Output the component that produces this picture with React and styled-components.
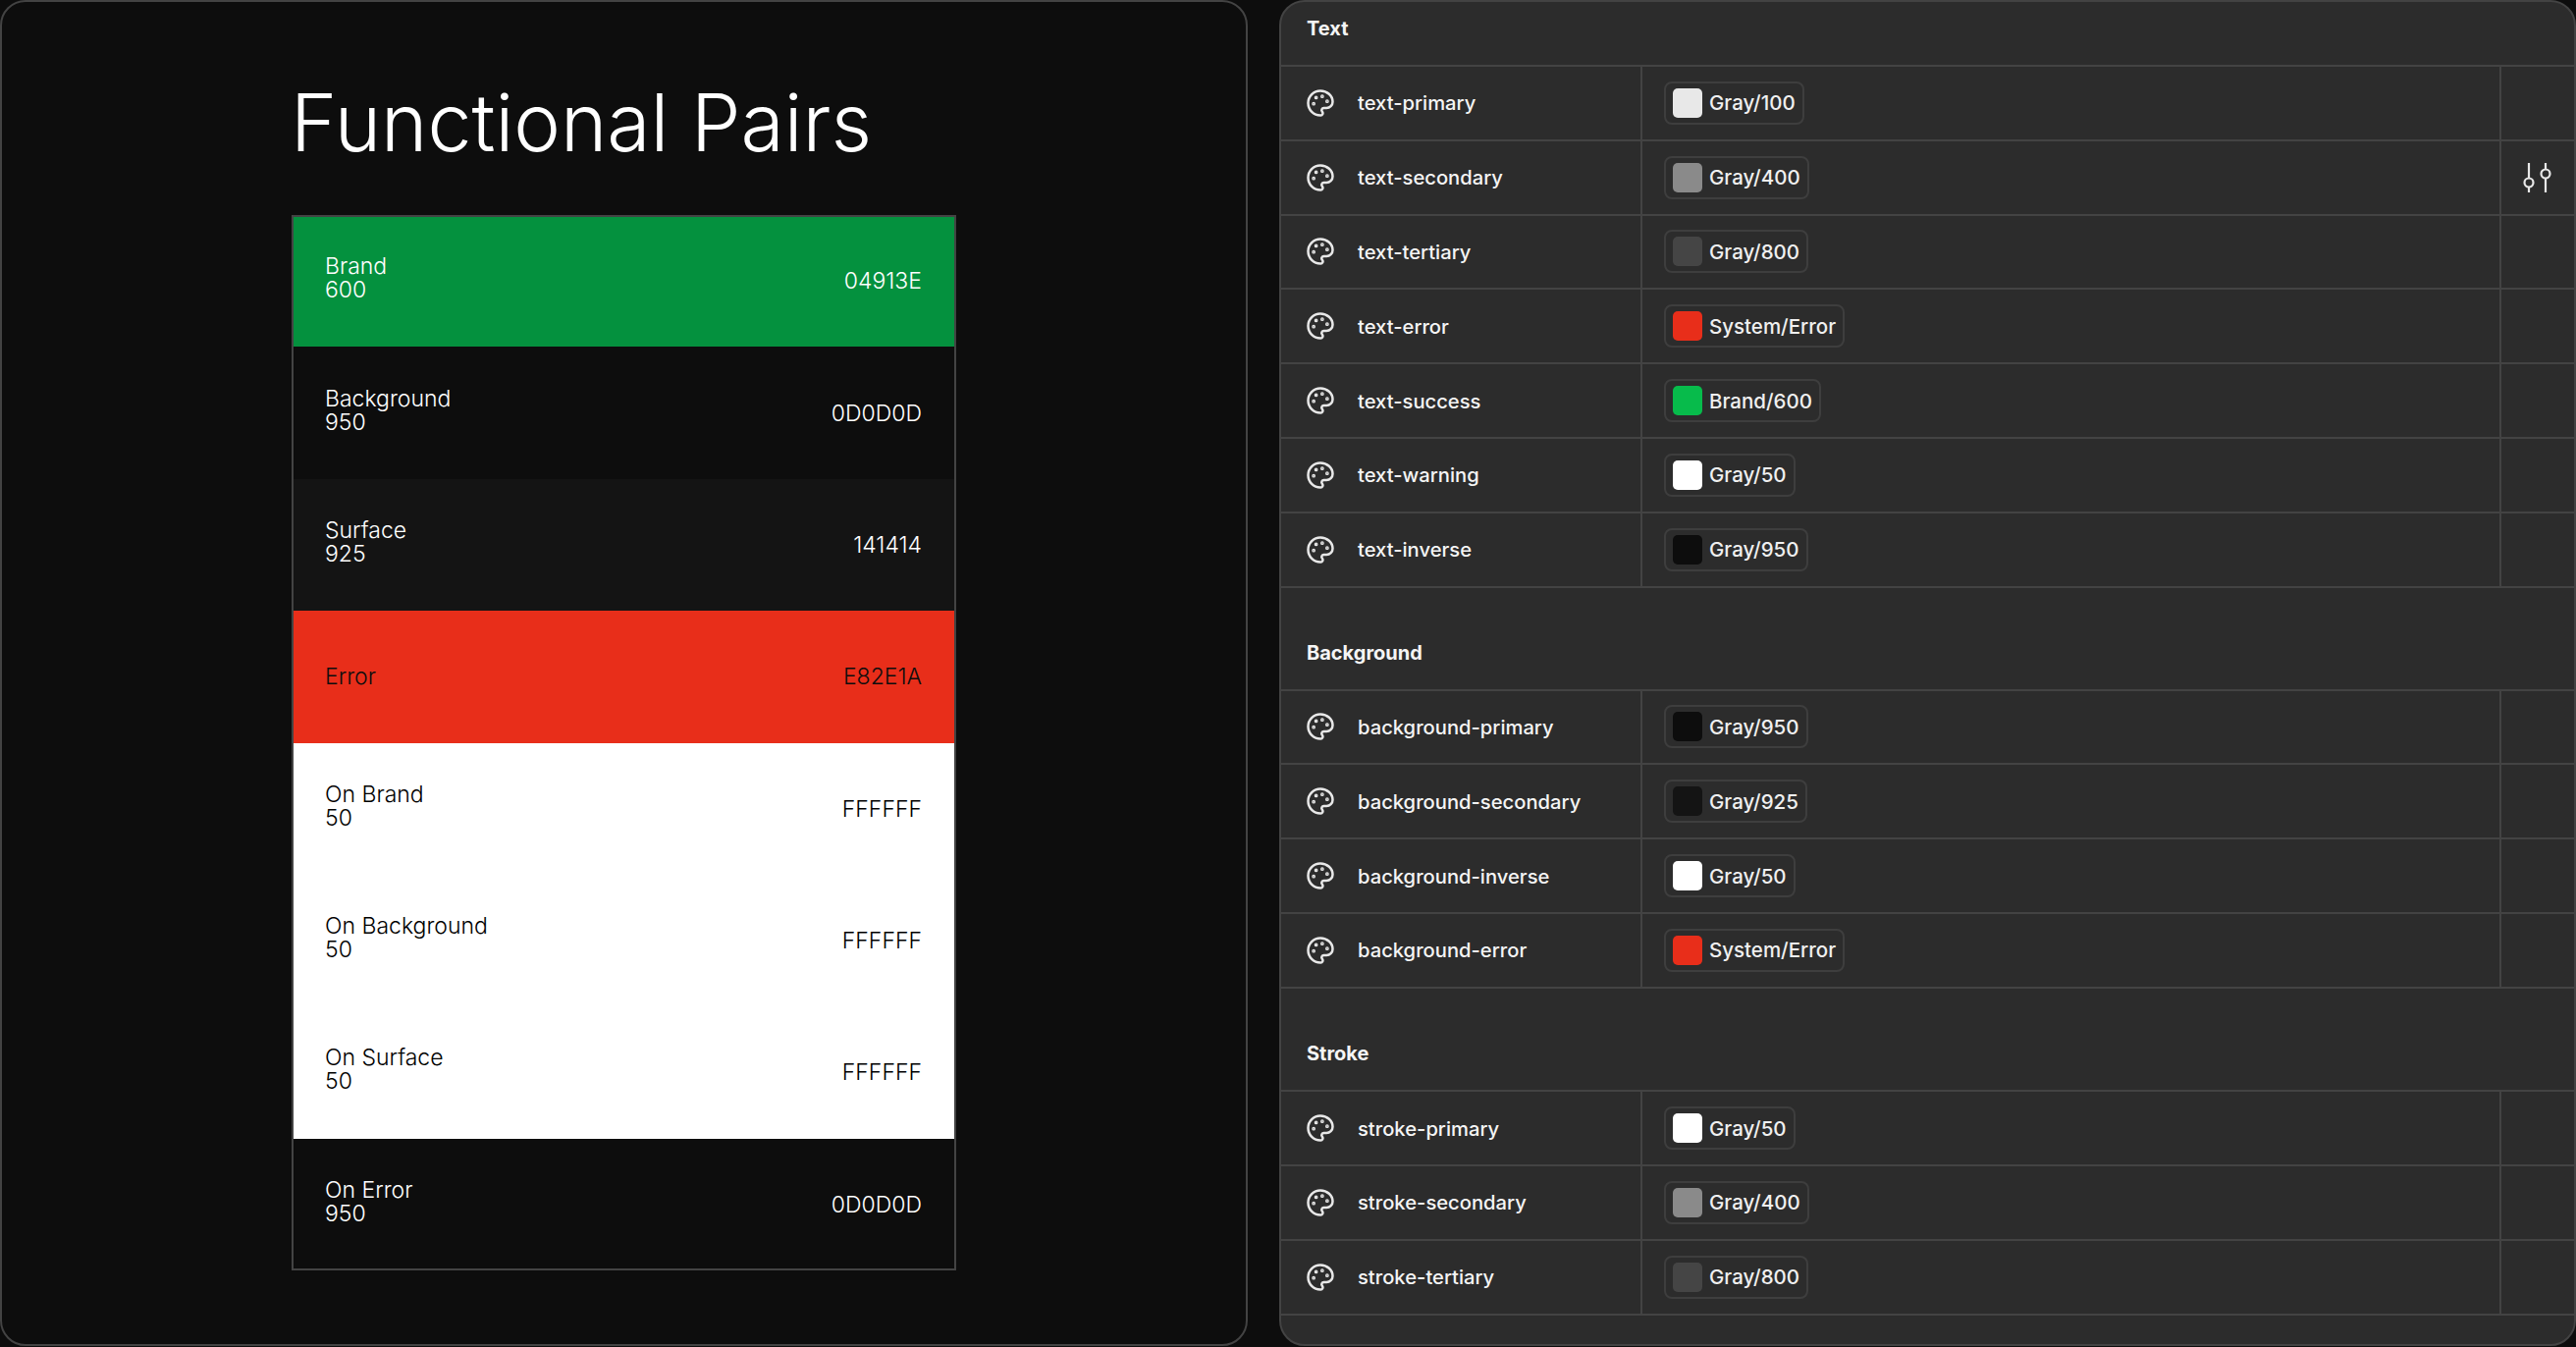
import styled, { createGlobalStyle } from 'styled-components';
import { Palette } from 'lucide-react';

const GlobalStyle = createGlobalStyle`
	html, body {
		margin: 0;
		background: #0d0d0d;
	}
	* {
		box-sizing: border-box;
	}
`;

const Page = styled.div`
	display: grid;
	grid-template-columns: 1271px 1321px;
	column-gap: 32px;
	width: 2624px;
	height: 1372px;
	overflow: hidden;
	font-family: Inter, 'Liberation Sans', sans-serif;
`;

const PairsPanel = styled.section`
	height: 1371px;
	padding: 84px 0 0 295px;
	background: #0d0d0d;
	border: 2px solid #434343;
	border-radius: 26px;
`;

const Title = styled.h1`
	margin: 0 0 55px -1px;
	height: 78px;
	color: #fff;
	font-size: 80.5px;
	font-weight: 300;
	line-height: 78px;
`;

const PairsTable = styled.div`
	position: relative;
	display: grid;
	grid-auto-rows: 1fr;
	width: 677px;
	height: 1075px;

	/* the frame sits over the colour rows */
	&::after {
		content: '';
		position: absolute;
		inset: 0;
		border: 2px solid #434343;
		pointer-events: none;
	}
`;

const Pair = styled.div`
	display: flex;
	align-items: center;
	justify-content: space-between;
	padding: 0 35px 0 34px;
	background: ${(p) => p.$bg};
	color: ${(p) => p.$fg};
	font-size: 23px;
	font-weight: 350;
	line-height: 24px;
`;

const PairName = styled.div`
	display: flex;
	flex-direction: column;
	margin-top: ${(p) => (p.$single ? 0 : -6)}px;
`;

const TokensPanel = styled.section`
	height: 1371px;
	background: #2c2c2c;
	border: 2px solid #434343;
	border-radius: 26px;
	overflow: hidden;
`;

const SectionHead = styled.div`
	display: flex;
	align-items: flex-end;
	height: ${(p) => p.$height}px;
	padding: 0 0 25px 26px;
	border-bottom: 2px solid #434343;
	color: #f5f5f5;
	font-size: 20px;
	font-weight: 700;
	line-height: 24px;
`;

const TokenRow = styled.div`
	display: grid;
	grid-template-columns: 368px 875px 1fr;
	height: 75.8px;
	border-bottom: 2px solid #434343;
`;

const Cell = styled.div`
	display: flex;
	align-items: center;
	min-width: 0;
	border-right: ${(p) => (p.$last ? 'none' : '2px solid #434343')};
`;

const NameCell = styled(Cell)`
	gap: 23px;
	padding-left: 25px;
	color: #f5f5f5;
	font-size: 20.2px;
	font-weight: 530;
`;

const ValueCell = styled(Cell)`
	padding-left: 22px;
`;

const ActionCell = styled(Cell)`
	justify-content: center;
`;

const Chip = styled.div`
	display: flex;
	align-items: center;
	gap: 7px;
	height: 44px;
	padding: 0 7px;
	border: 2px solid #3e3e3e;
	border-radius: 8px;
	color: #f0f0f0;
	font-size: 20.5px;
	font-weight: 530;
`;

const Swatch = styled.span`
	width: 30px;
	height: 30px;
	border-radius: 5px;
	background: ${(p) => p.$color};
`;

const Sliders = () => (
	<svg width="30" height="30" viewBox="0 0 30 30" fill="none" stroke="#e8e8e8" strokeWidth="2.2">
		<path d="M6 0v15M6 25v5M23 0v6M23 16v14" />
		<circle cx="6" cy="20" r="4.5" />
		<circle cx="23" cy="11" r="4.5" />
	</svg>
);

const GRAY_50 = { label: 'Gray/50', color: '#ffffff' };
const GRAY_100 = { label: 'Gray/100', color: '#e8e8e8' };
const GRAY_400 = { label: 'Gray/400', color: '#8a8a8a' };
const GRAY_800 = { label: 'Gray/800', color: '#454545' };
const GRAY_925 = { label: 'Gray/925', color: '#141414' };
const GRAY_950 = { label: 'Gray/950', color: '#0d0d0d' };
const ERROR = { label: 'System/Error', color: '#e82e1a' };
const BRAND = { label: 'Brand/600', color: '#07bb4b' };

const pairs = [
	{ lines: ['Brand', '600'], hex: '04913E', bg: '#04913e', fg: '#ffffff' },
	{ lines: ['Background', '950'], hex: '0D0D0D', bg: '#0d0d0d', fg: '#ffffff' },
	{ lines: ['Surface', '925'], hex: '141414', bg: '#141414', fg: '#ffffff' },
	{ lines: ['Error'], hex: 'E82E1A', bg: '#e82e1a', fg: '#0d0d0d' },
	{ lines: ['On Brand', '50'], hex: 'FFFFFF', bg: '#ffffff', fg: '#000000' },
	{ lines: ['On Background', '50'], hex: 'FFFFFF', bg: '#ffffff', fg: '#000000' },
	{ lines: ['On Surface', '50'], hex: 'FFFFFF', bg: '#ffffff', fg: '#000000' },
	{ lines: ['On Error', '950'], hex: '0D0D0D', bg: '#0d0d0d', fg: '#ffffff' }
];

const sections = [
	{
		title: 'Text',
		height: 66,
		rows: [
			['text-primary', GRAY_100],
			['text-secondary', GRAY_400, true],
			['text-tertiary', GRAY_800],
			['text-error', ERROR],
			['text-success', BRAND],
			['text-warning', GRAY_50],
			['text-inverse', GRAY_950]
		]
	},
	{
		title: 'Background',
		height: 105,
		rows: [
			['background-primary', GRAY_950],
			['background-secondary', GRAY_925],
			['background-inverse', GRAY_50],
			['background-error', ERROR]
		]
	},
	{
		title: 'Stroke',
		height: 105.5,
		rows: [
			['stroke-primary', GRAY_50],
			['stroke-secondary', GRAY_400],
			['stroke-tertiary', GRAY_800]
		]
	}
];

const App = () => (
	<>
		<GlobalStyle />
		<Page>
			<PairsPanel>
				<Title>Functional Pairs</Title>
				<PairsTable>
					{pairs.map((pair) => (
						<Pair key={pair.lines[0]} $bg={pair.bg} $fg={pair.fg}>
							<PairName $single={pair.lines.length === 1}>
								{pair.lines.map((line) => (
									<span key={line}>{line}</span>
								))}
							</PairName>
							<span>{pair.hex}</span>
						</Pair>
					))}
				</PairsTable>
			</PairsPanel>
			<TokensPanel>
				{sections.map((section) => (
					<div key={section.title}>
						<SectionHead $height={section.height}>{section.title}</SectionHead>
						{section.rows.map(([name, value, hasAction]) => (
							<TokenRow key={name}>
								<NameCell>
									<Palette size={30} strokeWidth={2} color="#e8e8e8" />
									{name}
								</NameCell>
								<ValueCell>
									<Chip>
										<Swatch $color={value.color} />
										{value.label}
									</Chip>
								</ValueCell>
								<ActionCell $last>{hasAction && <Sliders />}</ActionCell>
							</TokenRow>
						))}
					</div>
				))}
			</TokensPanel>
		</Page>
	</>
);

export default App;
